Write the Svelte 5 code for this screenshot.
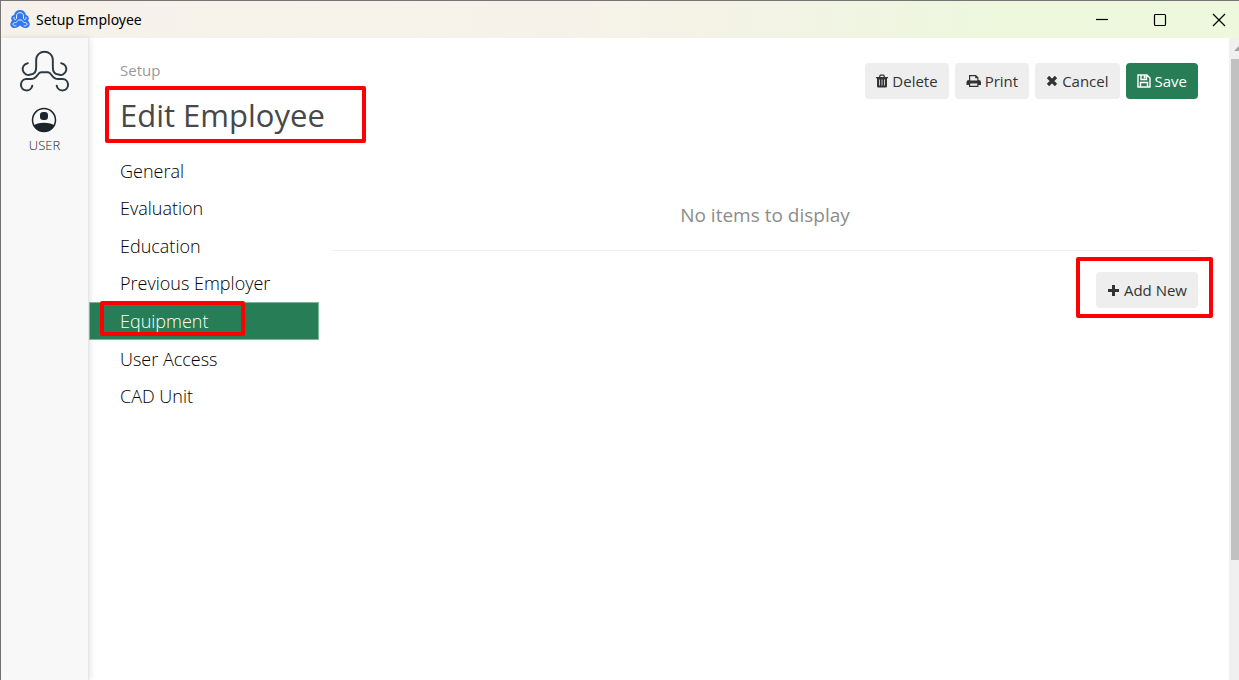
<script>
	const tabs = ['General', 'Evaluation', 'Education', 'Previous Employer', 'Equipment', 'User Access', 'CAD Unit'];

	let activeTab = $state('Equipment');
</script>

<div class="window">
	<header class="titlebar">
		<svg class="app-icon" viewBox="0 0 20 20" aria-hidden="true">
			<path class="icon-back" d="M10 0C13.500 0 15.500 2 16 5 19 5.500 19.500 9 18 11 20.500 12.500 20.500 17.500 16.500 18 13.500 18.500 12 17 10 15.500 8 17 6.500 18.500 3.500 18-.5 17.500-.5 12.500 2 11 .5 9 1 5.500 4 5 4.500 2 6.500 0 10 0z" />
			<path class="icon-front" d="M4 7.500C3 10 6.500 10.500 6.500 8V6C6.500 1.500 13.500 1.500 13.500 6V8C13.500 10.500 17 10 16 7.500M6 15.500C3.500 17.500 1.500 13 4.500 12.700 8 12.500 7 10 9 10H11C13 10 12 12.500 15.500 12.700 18.500 13 16.500 17.500 14 15.500" />
		</svg>
		<span class="window-title">Setup Employee</span>
		<div class="window-controls">
			<button type="button" aria-label="Minimize">
				<svg viewBox="0 0 14 14"><path d="M1 6.500h12" /></svg>
			</button>
			<button type="button" aria-label="Maximize">
				<svg viewBox="0 0 14 14"><rect x="1.500" y="1.500" width="11" height="11" rx="1" /></svg>
			</button>
			<button type="button" aria-label="Close">
				<svg viewBox="0 0 14 14"><path d="M1 1l12 12M13 1L1 13" /></svg>
			</button>
		</div>
	</header>

	<div class="body">
		<aside class="sidebar">
			<svg class="logo" viewBox="19 50 50 43" aria-hidden="true">
				<path d="M27 63 A6 6 0 1 0 30 74.500 C34 74.500 35.500 71.500 35.500 67 V60 C35.500 48.500 52.500 48.500 52.500 60 V67 C52.500 71.500 54 74.500 58 74.500 A6 6 0 1 0 61 63" />
				<path d="M31.500 86 A5.800 5.800 0 1 1 25.500 79.200 H30 C37 79.200 36.500 72.300 40.500 72.300 H47.500 C51.500 72.300 51 79.200 58 79.200 H62.500 A5.800 5.800 0 1 1 56.500 86" />
			</svg>
			<a class="user" href="#user">
				<svg viewBox="0 0 26 26" aria-hidden="true">
					<defs>
						<clipPath id="avatar"><circle cx="13" cy="13" r="11.500" /></clipPath>
					</defs>
					<circle cx="13" cy="13" r="11.500" fill="none" stroke="currentColor" stroke-width="1.500" />
					<rect x="9" y="5" width="8" height="8" rx="3.200" fill="currentColor" />
					<path clip-path="url(#avatar)" d="M2 19q4-3.200 11-3.200T24 19v7H2z" fill="currentColor" />
				</svg>
				USER
			</a>
		</aside>

		<div class="page">
			<div class="left">
				<div class="heading">
					<p class="crumb">Setup</p>
					<h1 class="marked mark-title">Edit Employee</h1>
				</div>
				<nav>
					{#each tabs as tab}
						<button type="button" class:active={tab === activeTab} onclick={() => (activeTab = tab)}>
							<span class:marked={tab === 'Equipment'} class:mark-tab={tab === 'Equipment'}>{tab}</span>
						</button>
					{/each}
				</nav>
			</div>

			<main>
				<div class="toolbar">
					<button type="button" class="btn">
						<svg viewBox="0 0 12 14" width="12" height="14" aria-hidden="true">
							<path fill="currentColor" fill-rule="evenodd" d="M3 3l.6-2Q3.800.5 4.400.5h3.200q.6 0 .8.5l.6 2h3v1.200H11V12q0 1.500-1.300 1.500H2.300Q1 13.500 1 12V4.200H0V3zM4.200 3h3.600l-.5-1.300H4.700zM3 5.500v6h.8v-6zm2.600 0v6h.8v-6zm2.600 0v6h.8v-6z" />
						</svg>
						Delete
					</button>
					<button type="button" class="btn">
						<svg viewBox="0 0 15 14" width="15" height="14" aria-hidden="true">
							<path fill="currentColor" fill-rule="evenodd" d="M3 6V1h7l2.500 2.500V6Q15 6 15 8v3h-2.500v2h-9.500v-2H.5V8q0-2 2.500-2zM4.200 2.200v4.300h7.100V4.300H9.200V2.200zM4.200 9.500v2.300h7.100V9.500z" />
						</svg>
						Print
					</button>
					<button type="button" class="btn">
						<svg viewBox="0 0 12 12" width="12" height="12" aria-hidden="true">
							<path d="M2 2l8 8M10 2l-8 8" stroke="currentColor" stroke-width="3.200" />
						</svg>
						Cancel
					</button>
					<button type="button" class="btn primary">
						<svg viewBox="0 0 14 14" width="14" height="14" aria-hidden="true">
							<path fill="none" stroke="currentColor" stroke-width="1.400" d="M1 1h9l3 3v9H1zM3.500 13V8.500h7V13M4 1v4.500h5.500V1" />
							<path fill="currentColor" d="M6.700 1.500h1.800v3H6.700z" />
						</svg>
						Save
					</button>
				</div>
				<p class="empty">No items to display</p>
				<div class="footer">
					<div class="marked mark-add">
						<button type="button" class="btn">
							<svg viewBox="0 0 13 13" width="13" height="13" aria-hidden="true">
								<path d="M6.500 1v11M1 6.500h11" stroke="currentColor" stroke-width="3" />
							</svg>
							Add New
						</button>
					</div>
				</div>
			</main>
		</div>

		<div class="scrollbar" aria-hidden="true">
			<svg viewBox="0 0 8 5"><path d="M3 5l5-5v5z" /></svg>
			<div class="thumb"></div>
		</div>
	</div>
</div>

<style>
	:global(body) {
		background: #fff;
		overflow: hidden;
	}

	.window {
		box-sizing: border-box;
		min-height: 100vh;
		display: flex;
		flex-direction: column;
		border: 1px solid #777475;
		border-width: 1px 0 0 1px;
		font-family: 'Open Sans', 'Noto Sans', sans-serif;
		color: #333;
	}

	button {
		font: inherit;
		color: inherit;
		border: 0;
		background: none;
		padding: 0;
		cursor: pointer;
	}

	h1,
	p {
		margin: 0;
		font-weight: 400;
	}

	.titlebar {
		height: 37px;
		display: flex;
		align-items: center;
		padding-left: 9px;
		background: linear-gradient(90deg, #f6f2eb 0%, #f7f2e9 45%, #f2f4e4 65%, #edf8dd 80%, #edf8dd 100%);
		color: #000;
	}

	.app-icon {
		width: 20px;
		height: 20px;
	}

	.icon-back {
		fill: #3478f0;
	}

	.icon-front {
		fill: none;
		stroke: #e4edff;
		stroke-width: 1;
		stroke-linecap: round;
	}

	.window-title {
		margin-left: 6px;
		font-family: 'Noto Sans', sans-serif;
		font-size: 14px;
	}

	.window-controls {
		display: flex;
		margin-left: auto;
	}

	.window-controls button {
		width: 58px;
		height: 36px;
		display: flex;
		align-items: center;
		justify-content: center;
	}

	.window-controls button:last-child {
		width: 40px;
		margin-left: 10px;
	}

	.window-controls svg {
		width: 14px;
		height: 14px;
		fill: none;
		stroke: #000;
		stroke-width: 1.2;
	}

	.body {
		flex: 1;
		display: flex;
	}

	.sidebar {
		width: 87px;
		display: flex;
		flex-direction: column;
		align-items: center;
		gap: 14px;
		padding-top: 12px;
		background: #f8f8f8;
		border-right: 1px solid #e6e6e6;
		box-shadow: 1px 0 6px rgba(0, 0, 0, 0.12);
	}

	.logo {
		width: 49px;
		height: 43px;
		fill: none;
		stroke: #2d3a42;
		stroke-width: 2;
		stroke-linecap: round;
	}

	.user {
		display: flex;
		flex-direction: column;
		align-items: center;
		gap: 3px;
		font-size: 13px;
		font-weight: 300;
		line-height: 18px;
		color: #1b252b;
		text-decoration: none;
	}

	.user svg {
		width: 26px;
		height: 26px;
	}

	.page {
		flex: 1;
		display: flex;
		padding-right: 31px;
	}

	.left {
		width: 230px;
		margin-right: 13px;
	}

	.heading {
		padding: 21px 0 14px 31px;
	}

	.crumb {
		font-size: 15px;
		line-height: 22px;
		color: #999;
	}

	h1 {
		width: 230px;
		font-size: 31px;
		line-height: 45px;
		margin-top: 12px;
		color: #484848;
		white-space: nowrap;
	}

	nav {
		display: grid;
		grid-auto-rows: 1fr;
		min-height: 263px;
	}

	nav button {
		padding-left: 30px;
		border: 1px solid transparent;
		font-size: 18px;
		font-weight: 300;
		text-align: left;
		color: #000;
	}

	nav .active {
		background: #267d56;
		border-color: #7db598;
		color: #fff;
	}

	/* red call-out frames */
	.marked {
		position: relative;
	}

	.marked::after {
		content: '';
		position: absolute;
		border: 4px solid #f00;
		border-radius: 2px;
		pointer-events: none;
	}

	.mark-title::after {
		inset: -7px -16px -5px -15px;
	}

	.mark-tab::after {
		inset: -8px -36px -3px -20px;
	}

	.mark-add::after {
		inset: -15px -15px -10px -20px;
	}

	main {
		flex: 1;
	}

	.toolbar {
		display: flex;
		justify-content: flex-end;
		gap: 6px;
		padding-top: 25px;
	}

	.btn {
		height: 36px;
		display: flex;
		align-items: center;
		gap: 4px;
		padding: 0 11px;
		border-radius: 4px;
		background: #eee;
		font-size: 15px;
	}

	.primary {
		background: #267d56;
		color: #fff;
	}

	.empty {
		padding: 101px 0 20px;
		border-bottom: 1px solid #eee;
		font-size: 19px;
		line-height: 30px;
		text-align: center;
		color: #8c8c8c;
	}

	.footer {
		display: flex;
		justify-content: flex-end;
		padding-top: 21px;
	}

	.scrollbar {
		width: 10px;
		display: flex;
		flex-direction: column;
		align-items: flex-end;
		background: #f0f0f0;
	}

	.scrollbar svg {
		width: 8px;
		height: 5px;
		margin: 8px 0;
		fill: #a3a3a3;
	}

	.thumb {
		width: 8px;
		height: 78%;
		background: #c1c1c1;
	}
</style>
